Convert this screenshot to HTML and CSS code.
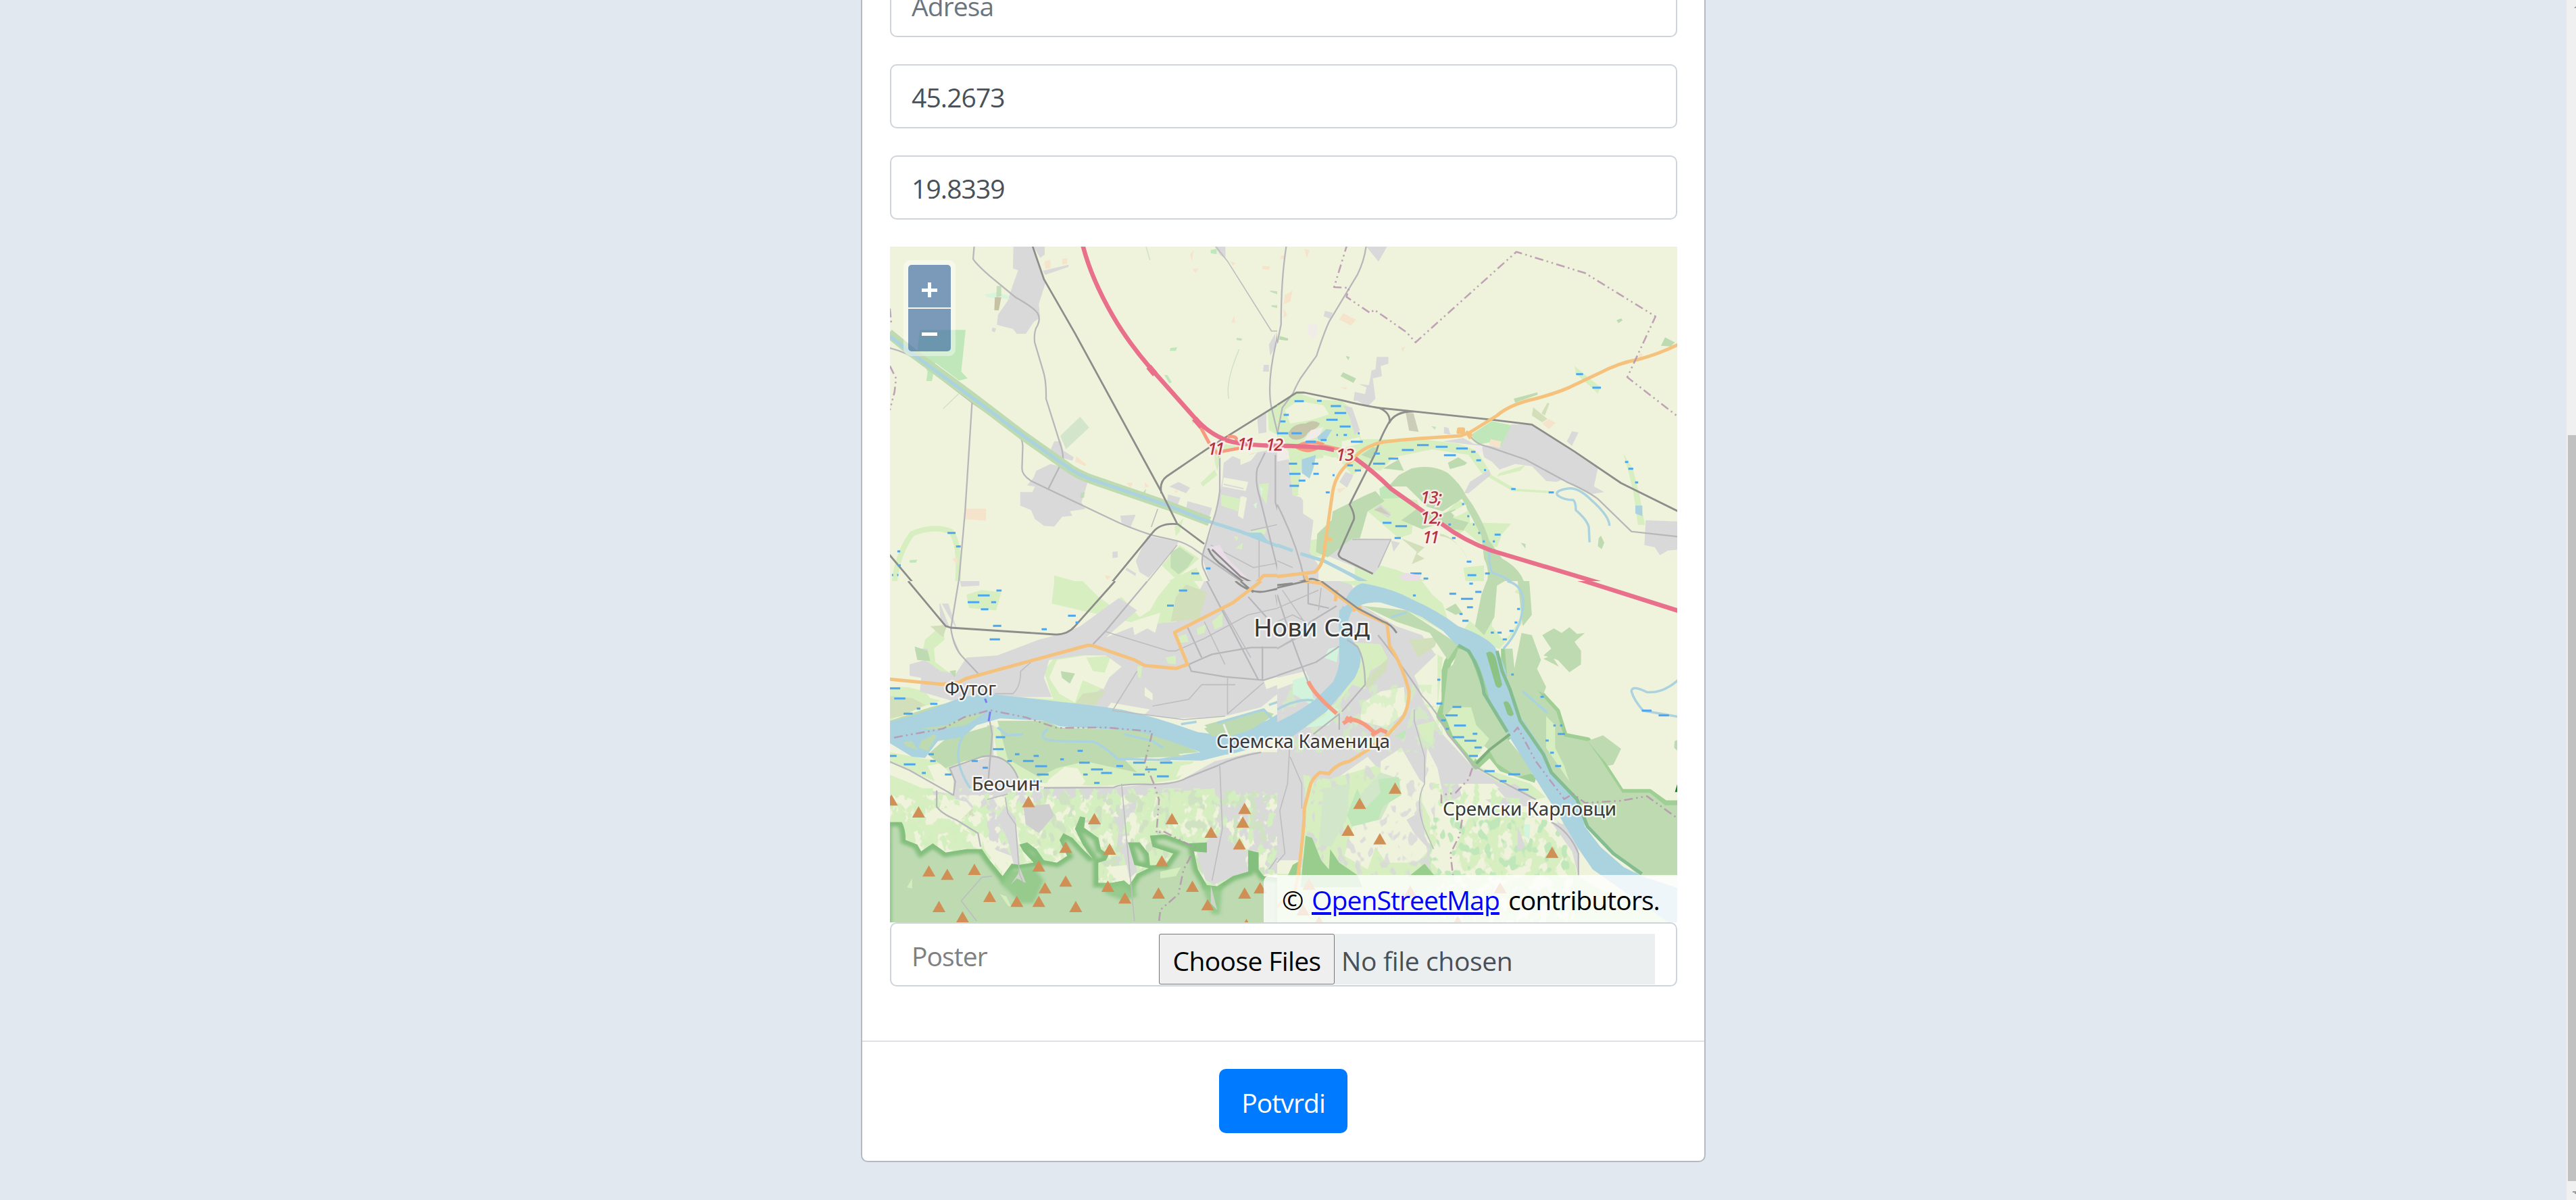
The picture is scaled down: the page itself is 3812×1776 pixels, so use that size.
FILE: index.html
```html
<!DOCTYPE html>
<html lang="sr">
<head>
<meta charset="utf-8">
<title>Potvrdi</title>
<link rel="stylesheet" href="styles.css">
</head>
<body>
<div class="page">
<main class="content">
<form class="card">
<div class="card-body">
<input class="field" type="text" placeholder="Adresa">
<input class="field" type="text" value="45.2673">
<input class="field" type="text" value="19.8339">
<div class="map-group">
<div class="map">
<svg class="map-canvas" viewBox="1317 365 1165 1000" preserveAspectRatio="none">
<defs>
<path id="pk" d="M-25 0L0-50L25 0Z" fill="#d08f55"/>
<filter id="n1" x="0" y="0" width="1" height="1"><feTurbulence type="fractalNoise" baseFrequency=".022 .016" numOctaves="3" seed="4"/><feColorMatrix values="0 0 0 0 0 0 0 0 0 0 0 0 0 0 0 14 0 0 0 -7.2"/><feComposite in="SourceGraphic" operator="in"/></filter>
<filter id="n2" x="0" y="0" width="1" height="1"><feTurbulence type="fractalNoise" baseFrequency=".028 .016" numOctaves="3" seed="11"/><feColorMatrix values="0 0 0 0 0 0 0 0 0 0 0 0 0 0 0 14 0 0 0 -7.6"/><feComposite in="SourceGraphic" operator="in"/></filter>
<filter id="n3" x="0" y="0" width="1" height="1"><feTurbulence type="fractalNoise" baseFrequency=".03 .018" numOctaves="2" seed="23"/><feColorMatrix values="0 0 0 0 0 0 0 0 0 0 0 0 0 0 0 14 0 0 0 -8"/><feComposite in="SourceGraphic" operator="in"/></filter>
<filter id="soft" x="-.1" y="-.1" width="1.2" height="1.2"><feGaussianBlur stdDeviation="7"/></filter>
<path id="hill" d="M30 1070L90 1070Q105 1100 105 1150L150 1170L165 1200L210 1165L260 1205L340 1190L400 1190L430 1240L480 1310L515 1255L545 1260L600 1250L560 1200L545 1170L575 1160L610 1190L640 1240L690 1250L730 1220L700 1150L715 1120L750 1140L790 1190L830 1235L790 1170L760 1100L780 1045L800 1050L795 1095L850 1140L860 1190L890 1215L880 1240L850 1250L850 1340L900 1340L950 1330L970 1350L1000 1300L1045 1275L990 1260L965 1160L1010 1160L1045 1210L1050 1262L1110 1260L1140 1210L1060 1180L1050 1130L1110 1125L1200 1165L1270 1160L1270 1205L1220 1200L1235 1280L1270 1350L1310 1355L1370 1310L1430 1290L1430 1195L1470 1205L1470 1280L1490 1310L1560 1320V1590H30Z"/>
<clipPath id="hillclip"><use href="#hill"/></clipPath>
</defs>
<rect class="farm" x="1317" y="365" width="1165" height="1000"/>

<!-- north-west -->
<svg x="1300" y="360" width="590" height="500" viewBox="0 0 1542 1500" preserveAspectRatio="none">
<path class="grass" d="M1165 1340L1240 1400L1150 1490L1095 1430ZM1245 1065L1300 1005L1310 1030L1255 1080ZM680 1475L790 1510H680ZM1300 905L1325 890L1390 900L1330 930L1310 1010L1300 970ZM1505 745L1542 720V850L1510 830ZM1120 1500L1230 1440L1260 1510ZM1205 770L1225 790L1215 805ZM1180 1220L1165 1280L1150 1300L1145 1260Z"/>
<path class="line grass-l" d="M60 1530Q70 1380 130 1290Q210 1250 280 1280Q320 1340 305 1530"/>
<path class="res" d="M522 15H592L645 180L620 270L625 330L600 350L570 402L535 402L520 380L490 372L458 362L462 318L500 255L515 200L540 120L520 112ZM600 15H643V50L625 65ZM635 122L735 95V105L645 140ZM440 375L455 378L450 395L438 390ZM600 1040L610 1010L665 980L700 990L720 985L770 1030L808 1065L785 1150L800 1180L740 1190L750 1210L710 1215L680 1258L640 1255L605 1225L590 1185L548 1165V1105H595L605 1080L575 1075ZM660 930L680 880L705 878L715 920L755 950L750 965L700 950ZM1040 1300L1160 1325L1150 1350L1045 1485L1010 1460L995 1410ZM1125 1080L1160 1060L1205 1085L1190 1110ZM1120 1115L1168 1130L1155 1168L1115 1155ZM1195 1145L1290 1175L1280 1215L1190 1180ZM1465 780L1500 750V840L1470 845ZM935 1210L995 1205L975 1260L940 1240ZM905 1370L925 1368V1395L905 1398ZM960 1440L995 1465V1478L955 1450ZM320 1500H390V1510H320ZM1300 15H1342V70L1320 50ZM1490 540H1510V570H1487ZM1510 450L1535 400V460L1515 500Z"/>
<path class="res" d="M1335 975L1370 945L1400 960L1440 935L1500 920H1545V1530H1290L1250 1390L1280 1300L1310 1180L1330 1050Z"/>
<path class="farm" d="M1400 950L1465 930L1440 965L1400 985ZM1335 1040L1430 1060L1420 1100L1330 1080ZM1400 1120L1425 1130L1410 1225L1390 1210Z"/>
<path class="stripes" d="M1335 1070L1412 1090M1335 1088L1410 1108M1335 1106L1405 1124"/>
<path class="grass" d="M1325 1115L1400 1135L1390 1190L1325 1165ZM1470 1070L1510 1065L1500 1160L1480 1120ZM1390 1345L1410 1330L1405 1360L1382 1355ZM1375 1300L1392 1305L1385 1325ZM1435 1280L1500 1265L1495 1290L1450 1310Z"/>
<path fill="#d6f5dc" d="M410 228L455 218L500 232L508 250L480 245L420 240ZM1475 1080L1488 1090L1480 1125ZM1450 1160L1465 1150L1460 1180Z"/>
<path class="park" d="M160 385H337L320 570L345 600L312 610L220 530L207 612H185L190 570L150 480ZM1105 585H1118L1135 618L1125 622ZM1130 465L1155 462L1150 478L1126 478ZM1285 30L1308 25L1308 48L1285 45ZM120 1407L150 1405L145 1418L120 1418Z"/>
<path fill="#d3e6cb" d="M780 770L815 818L725 915L703 855Z"/>
<path class="wood" d="M457 190H475V235L456 240ZM782 1110L798 1105L795 1130L780 1130ZM1130 1370L1165 1350L1220 1395L1195 1440L1160 1470L1130 1440ZM1020 1110L1035 1090L1030 1125ZM1515 210L1550 215L1545 228L1515 215ZM1385 420L1405 423V433L1385 430ZM1520 275H1550V290L1520 282Z" opacity=".85"/>
<path fill="#c6c2a3" d="M450 240H475L465 298H448Z"/>
<path class="sand" d="M643 80L665 73V110L645 115ZM710 70L730 66V90L712 95ZM335 1178H416V1232L335 1225ZM1485 100L1515 103L1510 118L1485 115ZM1215 115L1240 110L1225 132ZM1360 80L1383 88L1370 100ZM765 945L803 980L800 990L760 970ZM960 1065L985 1062L975 1085ZM1030 1060L1045 1080L1030 1085ZM1145 1095L1160 1100L1148 1110ZM285 1400L305 1395V1430ZM875 1475L900 1478L885 1495ZM1365 350L1380 355L1375 320ZM1205 50L1220 30L1212 80Z"/>
<path class="road" d="M370 15L366 70Q380 95 430 145L530 240Q600 285 615 310Q628 335 615 365Q600 390 604 440L635 560Q650 610 648 690L700 880Q718 940 712 965L655 1095M44 465Q110 485 150 520L360 705L530 840Q557 860 558 900L555 1000Q555 1030 590 1055L900 1225Q960 1260 1060 1297L1150 1320Q1190 1330 1230 1365L1400 1500M362 705L335 1190L310 1510"/>
<path class="line canal-edge" d="M40 400L130 485L360 680L560 855L720 985Q770 1030 840 1055L1120 1165L1280 1235"/>
<path class="line canal" d="M40 410L130 490L360 683L560 855L720 985Q770 1030 840 1055L1120 1165L1250 1225L1400 1280L1545 1345"/>
<path class="water" d="M1410 1285L1480 1285L1505 1320L1490 1328Z"/>
<path class="road" d="M1320 955V1100Q1310 1190 1285 1260L1265 1340Q1245 1400 1255 1440L1290 1530M1535 940V1150L1600 1400M1495 930L1465 1000Q1455 1060 1475 1130L1555 1500M1562 15Q1560 300 1540 430Q1500 620 1520 730L1545 850"/>
<path class="minor" d="M1305 15L1350 80L1520 390H1545M1285 1340L1450 1440L1545 1420M1472 1320V1500M1440 1275L1560 1245M1155 1340L1020 1530M1080 1180L1055 1260"/>
<path fill="none" stroke="#cfe3c0" stroke-width="1.5" vector-effect="non-scaling-stroke" d="M1395 470Q1340 620 1355 690M250 735L310 668M1035 15L1050 75"/>
<path fill="#eadde7" d="M1275 1350L1320 1340L1350 1400L1430 1490L1400 1500Z"/>
<path class="rail" d="M592 0L640 160L760 400L1090 1095L1155 1245L1260 1335M1094 1110Q1085 1060 1115 1035L1275 910L1345 860L1568 700M885 1530L1060 1285Q1090 1240 1155 1247M40 1380L150 1530M1275 1355Q1290 1400 1340 1440L1430 1520M1290 1360L1400 1480L1460 1515"/>
<path class="trunk" d="M1245 815L1285 900L1320 945M1325 925L1395 910M1350 860Q1390 850 1385 885"/>
<path class="sec" d="M1440 1530L1490 1475L1545 1475"/>
<path class="mway" d="M788 0Q820 150 905 320Q960 430 1045 545L1215 765Q1270 840 1340 872Q1400 898 1568 900"/>
<path class="mway wide" d="M1045 548L1070 582M1222 778L1250 815"/>
<path class="bound" d="M44 290L50 360M44 545L68 600L62 660L44 740"/>
<path class="wet" d="M267 1286h31M300 1346h18M73 1368h11M74 1430h12M1210 1466h30M1266 1444h18M1555 762h15M1548 844h20M52 1473h5M72 1473h5"/>
</svg>

<!-- north-east -->
<svg x="1890" y="360" width="600" height="500" viewBox="0 0 1568 1500" preserveAspectRatio="none">
<path class="grass" d="M0 720L80 665L160 695L250 700L290 740L325 870L560 870L700 890L770 920L810 990L830 1030L920 1090L1060 1100L1060 1110L910 1100L790 1020L740 940L600 915L450 950L400 1010L330 1000L290 1030L240 960L180 940L150 1080L60 1130L45 940L30 880L0 860ZM350 1190L420 1120L540 1140L560 1190L530 1200L520 1290L470 1310L400 1240ZM1150 545L1250 640L1240 668L1215 640L1155 580ZM1338 932L1375 1000L1400 1110L1422 1250H1395L1378 1110L1360 1020ZM700 1250L760 1240L905 1245L870 1290L850 1350L780 1330ZM860 1020L960 985L940 1010L850 1035ZM300 1400L460 1450L600 1510H300ZM720 1440L800 1430V1510H730ZM120 1320L170 1310V1390H120ZM10 1165H48V1260L20 1220ZM700 1140L745 1170V1260L690 1300L650 1200Z"/>
<path class="res" d="M0 940L45 960L60 1120L100 1130V1200L140 1230L125 1370L160 1430V1510H0ZM200 1390L285 1240L305 1250L290 1310L440 1315L395 1440L370 1470ZM865 905L905 805L985 805L1240 1000L1225 1080L1265 1105L1210 1115L1100 1050L1080 1060L1040 1055L985 990L920 980L860 1005L830 970L800 950L790 900L640 880L720 865L760 890ZM1425 1230L1550 1235V1360L1510 1365L1480 1385L1460 1350L1420 1340ZM345 15H425L392 82ZM385 505H430V535L400 545L405 590L370 600L380 690L350 725L310 700L295 700L300 660L340 670L345 640L315 625L355 630L365 565L380 560ZM185 300L215 308L205 335L180 325ZM240 1060L265 1015L295 1030L270 1085ZM375 1180L400 1160L440 1200L430 1220ZM723 1110L745 1060L820 1005L825 1030L740 1110ZM440 1320L475 1330L450 1370ZM1120 880L1140 835L1165 840L1140 900ZM645 815L662 820L670 850L645 845ZM255 720L290 730L320 830L300 850L280 770ZM510 1050L535 1065V1085L515 1080Z"/>
<path class="farm" d="M30 740L80 700L180 720L200 760L130 785L50 800ZM100 960L230 950L240 1020L190 1120L130 1190L80 1110ZM250 880L320 860V890L250 910Z"/>
<path class="wood" d="M520 1000Q600 980 660 1020Q710 1070 730 1120Q790 1210 820 1320L870 1400Q950 1450 960 1530H800Q830 1470 800 1400L790 1300L715 1135L640 1190L580 1170L500 1080H430L470 1030ZM340 1120L380 1100L415 1145L350 1190L320 1310H290L195 1395L150 1370L155 1290L210 1230L215 1190ZM410 1000L470 960L490 1010ZM660 975L700 950L735 975L725 985L668 1003ZM480 1230L540 1180L640 1200L690 1180L680 1220L740 1240L720 1275L680 1270L640 1240L560 1270ZM915 690L1005 662L1008 672L920 708ZM245 590L255 573L305 600L295 620ZM1500 418L1538 440L1522 458L1484 455ZM1243 1310L1252 1298L1265 1330L1255 1358L1240 1345ZM1312 342L1330 334L1336 342L1320 355ZM942 1330L960 1335V1355ZM325 940L370 905L390 910L370 960ZM10 412L42 422V433L8 428ZM265 500L280 505L275 520Z"/>
<path class="park" d="M830 790L905 808L865 905L840 880L775 895L750 850ZM395 1090L430 1065L480 1130L400 1135ZM595 812L615 815L610 828Z"/>
<path fill="#d3dfbb" d="M990 728L1045 780L1025 795L985 765ZM1022 755L1045 708L1053 712L1035 765ZM630 1290Q690 1300 740 1410Q700 1310 630 1300ZM480 1310L570 1350L540 1380L570 1400L520 1425L540 1370Z"/>
<path class="farm" d="M672 1195L730 1160L735 1190L690 1215Z"/>
<path fill="#cbcdb8" d="M497 752L527 755L547 838L510 832ZM375 1185L400 1170L440 1210Z"/>
<path fill="#c6c6aa" d="M45 840Q60 800 110 800Q140 780 165 800Q160 820 120 840Q100 880 60 870Q40 860 45 840Z"/>
<path class="sand" d="M240 340L255 310L305 340L285 365ZM825 870L867 880L860 910L820 895ZM1025 800L1050 780L1077 798L1050 825ZM30 230L60 210L50 260L25 270ZM105 25L125 30L115 65ZM480 465L495 460L485 485ZM25 290L40 320L25 330ZM245 640L272 640L265 650ZM15 55H30V70H12ZM230 1090L265 1085L240 1110ZM1400 490H1412V510H1398Z"/>
<path fill="#f1ece8" d="M120 360H155V400L140 425L118 400ZM763 905L795 895L790 935L765 925ZM0 920H45L40 960L0 970ZM130 830L180 815L160 860L100 880Z"/>
<path class="water" d="M155 860L190 825L212 828L190 870L160 875ZM95 960L150 940L140 1000L125 1045L95 1020ZM1385 1165H1412V1212L1385 1200ZM190 1420L240 1440L370 1510H330Z"/>
<path class="line canal" d="M0 1340L60 1365M90 1378L180 1410L300 1480"/>
<path class="stream thick" d="M1285 1255Q1285 1210 1210 1135Q1160 1080 1120 1090Q1070 1100 1085 1120Q1110 1140 1145 1140Q1155 1150 1155 1185Q1200 1230 1205 1260L1208 1328M820 1360Q820 1460 835 1465Q890 1480 940 1540"/>
<path class="road" d="M37 0Q15 150 15 360L0 445M345 0Q340 70 310 140L200 350Q180 400 152 500L90 600Q70 640 62 665L20 730L0 850M745 850Q760 890 820 905L960 960L1120 1060Q1200 1100 1240 1135L1370 1280L1550 1303M0 1160Q80 1340 108 1510"/>
<path class="minor" d="M290 1315H440L390 1440M0 1410L60 1440"/>
<path class="rail" d="M0 718L75 663H105L250 697Q330 720 400 732L540 748L840 785L985 805L1150 925L1330 1065L1550 1190M395 732Q435 750 435 790Q395 870 385 920L280 1160Q300 1200 297 1225L237 1380Q237 1395 260 1405L370 1468M530 747Q455 745 432 800M0 1530L130 1490Q160 1490 200 1530"/>
<path class="trunk" d="M80 900Q130 870 180 895M75 905Q120 935 160 905M180 900L280 925"/>
<path class="sec" d="M1550 450Q1480 490 1400 515Q1320 530 1240 580L1130 640Q1080 665 1000 690Q900 715 850 765L745 840L710 855L580 865Q450 875 400 885Q320 910 295 960Q230 1010 215 1100L185 1340Q180 1430 145 1460L0 1480M185 1315H212M110 1475L120 1505L190 1515"/>
<path class="sec" fill="#f4c27e" d="M700 840H720V825H702ZM735 840L745 862L748 850Z"/>
<path class="mway" d="M0 899Q100 900 180 908L220 918M302 955Q380 1020 440 1090L570 1195M635 1245Q720 1320 830 1365L1310 1530"/>
<path class="bound" d="M272 0L220 195L278 198L268 238L360 310L375 295L500 395L535 440L925 38L1190 132L1463 325L1354 595L1550 770"/>
<path class="wet" d="M67 701h36M154 700h18M207 723h40M222 754h45M190 784h44M25 762h20M12 791h20M242 814h42M0 844h43M55 844h40M168 874h23M110 881h39M285 881h46M482 918h46M541 896h45M613 904h46M645 941h46M692 911h45M750 926h17M770 964h18M430 956h38M371 979h46M45 979h32M47 1024h43M140 1024h21M83 1054h26M48 1077h36M135 979h24M271 986h22M300 1009h24M374 934h23M188 1106h15M408 1241h34M457 1256h45M454 1309h24M515 1466h43M566 1489h18M733 1414h18M736 1474h34M742 1511h14M804 1466h18M841 1294h23M905 1091h17M1050 1106h20M1156 581h27M1219 641h33M1345 971h13M1358 1001h19M1384 1062h12M676 1309h14M229 851h6M257 851h13M312 844h7M214 1030h8M800 1007h8M735 1212h8M757 1249h6M777 1286h8M795 1324h8M834 1324h8M715 1158h8M662 1249h10"/>
<path fill="#eadde7" d="M470 1480L500 1463L558 1475L535 1530Z"/>
</svg>

<!-- south-west -->
<svg x="1300" y="860" width="590" height="520" viewBox="0 0 1542 1560" preserveAspectRatio="none">
<path class="grass" d="M680 0H790L850 70L900 110L940 70L1010 160L1050 130L1080 70L1130 0H1220L1260 60L1200 160L1100 190L1040 200L860 150L780 130L670 100ZM340 60L400 40L475 50L455 130L350 120ZM180 260L250 190L255 260L215 300L220 360L300 430L200 380L170 320ZM40 470H110L180 490L200 520L240 530L120 580L40 620ZM640 400L680 340L770 320L810 340L900 330L870 420L860 500L960 560L700 560L670 510ZM430 510L700 525L860 560L690 545L440 530ZM44 760L180 790L260 800L290 860L220 890L120 840L44 800ZM440 640L520 680L560 760L680 740L960 800H1220L1160 880L1040 900L850 910L660 900L540 880L460 780ZM280 820L420 790L430 880L340 860Z"/>
<path class="res" d="M44 900L200 930L420 970L640 920L900 918L1160 890L1300 800L1450 760H1545V1300H1500L1350 1340L1280 1420L1230 1280L1180 1180L1060 1180L970 1150L950 1330L860 1180L700 1080L560 1240L420 1180L320 1180L230 1180L100 1180L44 1060ZM420 640L445 640V780Q500 790 540 880L640 915L560 940L420 985L350 990L290 950L290 880L275 830L430 780Z"/>
<path class="grass" d="M44 860L130 900L210 940L230 1020L400 1120L480 1320L100 1320L44 1170ZM640 1000L760 960L880 980L930 1100L900 1370L720 1230L560 1280L500 1200L470 1000L600 980ZM1000 960L1100 940L1300 920L1310 1300L1200 1300L1000 1330L980 1140Z"/>
<path class="res" d="M120 370L180 350L240 400L300 410L340 340L460 330L620 260L720 230L780 200L930 75L1000 130L880 250L990 200L1150 180L1200 130L1260 0H1545V500L1480 560L1340 600L1150 610L1000 590L820 560L780 540L860 480L880 440L940 380L880 330L780 330L660 350L640 430L670 515L460 515L280 530L160 490L165 430L120 420ZM315 0H390V20L320 25ZM235 100H270L300 200L330 330L300 300L280 210L240 180ZM140 300H190V350L150 345Z"/>
<path class="farm" d="M225 60L290 250L320 330L560 260L670 240L560 235L300 210ZM690 350L800 330L830 400L900 410L870 480L790 440L760 540L700 500L660 430ZM1030 470L1060 500V530L1030 510ZM900 540L1050 570L1020 600L880 570ZM980 180L1090 140L1070 230L1040 210L990 240ZM1490 440L1545 420V460L1500 480ZM660 880L720 825L770 830L800 890L780 915L640 915ZM190 820L240 810L290 870V940L230 920ZM230 950L340 980L400 1060L440 1180L300 1080L235 1020ZM1150 870L1170 820L1260 800L1200 850Z"/>
<path fill="#d2dfbb" d="M1150 70L1190 15L1270 50L1240 170L1130 180ZM790 500L880 485L840 550L760 545ZM44 510L130 520L180 550L90 600L44 610ZM370 1000L430 1000L380 1040L320 1060ZM200 200L265 195L250 250Z"/>
<path class="wood" d="M44 620L200 560L340 520L360 530L160 640L44 640ZM705 400L760 410L740 455L710 430ZM1260 640L1480 570L1530 590L1400 690L1320 690ZM140 290L190 310L200 355L150 350ZM275 400L300 395L295 430ZM260 700L440 640V775L330 800L260 830L190 770ZM460 620H650L700 650L1060 665L1240 760L950 790L1000 850L800 800L690 830L620 870L500 790ZM700 540L830 565L850 590L700 570Z"/>
<path class="grass" d="M1290 180L1330 140L1330 200L1300 215ZM1230 210L1270 190L1260 230L1235 240ZM1150 250L1190 235L1200 270L1160 275ZM1000 380L1020 375L1015 430H1005ZM1110 340L1150 330V370L1120 365Z"/>
<rect x="44" y="950" width="1500" height="420" fill="#f0f3dc" filter="url(#n1)"/>
<rect x="44" y="920" width="1500" height="450" fill="#d3efc0" filter="url(#n2)"/>
<rect x="600" y="930" width="940" height="400" fill="#cfe3c2" filter="url(#n3)"/>
<path fill="#d0cfcf" d="M560 1000L660 990L680 1040L620 1120L570 1080Z"/>
<path class="res" d="M1230 1200L1300 1120L1420 1200L1420 1290L1300 1345L1265 1330ZM490 1000L530 1050L550 1290H530L500 1150L460 1050ZM940 1180L980 1170L1000 1290L970 1320Z"/>
<path class="farm" d="M400 1130L460 1200L500 1260L495 1305L470 1280L410 1190ZM880 1270L960 1260L970 1320L930 1330ZM730 1080L760 1120L800 1170L770 1150Z"/>
<use href="#hill" fill="#bddab1"/>
<g clip-path="url(#hillclip)">
<use href="#hill" fill="none" stroke="#83bf7d" stroke-width="40" filter="url(#soft)"/>
<path d="M490 1290L600 1270L640 1330L600 1430L550 1430L470 1340ZM850 1330L990 1330L1000 1400L950 1420L880 1390ZM1250 1350L1330 1350L1320 1480L1290 1480Z" fill="#8cc785" opacity=".8" filter="url(#soft)"/>
<path d="M545 1270L570 1340L535 1320L510 1350L540 1300ZM1285 1350V1430L1310 1460" fill="#d0d5cc"/>
</g>
<path class="grass" d="M470 1390L495 1400L515 1450L500 1440ZM130 1320L110 1360L130 1365ZM1090 1290L1170 1270L1150 1310L1090 1320Z" opacity=".9"/>
<path class="line river" d="M30 667Q150 640 270 580Q370 530 470 545L700 575Q830 590 940 610Q1060 640 1180 690L1290 735Q1400 740 1545 640"/>
<path class="water" d="M44 640L150 620L340 530L470 515L640 550L740 580L880 585L1000 615L1160 660L1300 680L1500 620L1545 590V690L1380 760L1250 797L1130 795H930L1080 790L1245 760L1050 670L700 645L640 620L470 610L380 640L330 690L230 710L180 785L130 780L44 720Z"/>
<path class="wood" d="M160 655L260 640L340 600L410 585L340 640L230 660ZM95 715L130 710L150 750L110 735ZM165 710L215 680L225 690L190 755L155 740ZM650 670L880 670L1000 680L1180 780L960 785L850 715L640 700ZM1260 655L1320 625L1480 572L1525 600L1440 660L1360 690L1290 690Z"/>
<path class="stream thick" d="M325 690Q280 790 355 920M460 650L500 685L560 680M655 655Q600 710 700 710L830 713Q870 730 925 790L1130 795M1310 630L1490 570L1520 610M1100 740L1060 710L950 680M1510 550L1560 530M1170 635L1230 625"/>
<path class="line" d="M1335 635L1350 680" stroke="#eee" stroke-width="3"/>
<path class="road" d="M40 800L120 840L290 950L297 890L275 830L400 780Q500 760 540 875M640 918L910 916Q940 898 1060 903Q1150 900 1190 875L1310 820Q1380 780 1480 760M310 0L280 210Q290 290 320 330L385 410M430 620L440 680L425 880M225 930V1000Q240 1030 300 1060L385 1120L395 1180M1040 0L880 220L830 280M1270 0L1470 440M1430 70L1500 160M1200 370L1290 325L1440 295H1560M1200 370L1210 400L1340 425L1490 440L1545 420M1485 290V440M1195 205L1250 340"/>
<path class="minor" d="M940 900L960 1150L975 1330L990 1510M490 960L500 1030L530 1080L545 1300L560 1340M1320 820L1330 1100L1290 1330M880 225L1120 310L1150 310M1000 400L905 575L1180 615L1340 600M1060 555L1200 525L1250 460H1380M1350 430V590L1490 450M1260 180L1340 370M1330 120L1440 340M1150 310L1260 255L1430 150L1545 120M450 500L520 500Q550 470 550 400L590 360M1560 980V1200L1510 1280M420 970L500 945M440 1310L400 1315L320 1420L380 1510M1535 60L1545 120"/>
<path class="rail" d="M115 0L260 200L280 207L680 237Q730 240 760 200L915 0M1380 0Q1440 60 1500 45L1560 30M1400 0L1450 50"/>
<path class="sec" d="M40 435L245 458L310 450L340 432L810 285L830 287L990 350L1030 375L1150 388L1195 370L1145 228L1370 97L1480 0"/>
<path fill="none" stroke="#7a7cf5" stroke-width="3" vector-effect="non-scaling-stroke" d="M412 522L418 540M432 580L426 622"/>
<path class="bound" d="M60 695L250 655L330 605L430 573L570 605L690 652L880 650L1060 668L1030 805L1065 900L1085 970L1075 1120L1100 1110L1225 1185L1180 1280L1160 1390L1090 1460L1085 1510"/>
<path class="wet" d="M384 64h46M345 94h45M436 94h19M396 125h29M456 42h20M443 199h32M430 259h40M733 154h30M762 184h12M631 214h20M1162 42h32M1116 109h26M44 476h40M61 521h43M97 589h35M148 566h14M200 545h28M454 693h36M443 746h41M194 769h20M44 776h26M200 799h21M98 814h45M257 859h25M168 852h15M360 799h24M403 829h20M498 799h18M528 769h17M600 776h20M559 799h41M606 822h46M613 859h45M596 889h36M776 806h41M822 836h46M861 852h42M834 896h21M792 859h17M920 821h26M985 806h45M1031 836h45M985 859h45M1089 806h47M1077 867h46M770 754h20M703 791h14"/>
<use href="#pk" x="50" y="997"/><use href="#pk" x="155" y="1050"/><use href="#pk" x="580" y="1004"/><use href="#pk" x="835" y="1080"/><use href="#pk" x="1135" y="1080"/><use href="#pk" x="1416" y="1034"/><use href="#pk" x="1409" y="1095"/><use href="#pk" x="1286" y="1140"/><use href="#pk" x="1396" y="1192"/><use href="#pk" x="724" y="1207"/><use href="#pk" x="894" y="1215"/><use href="#pk" x="1096" y="1267"/><use href="#pk" x="195" y="1312"/><use href="#pk" x="266" y="1327"/><use href="#pk" x="371" y="1305"/><use href="#pk" x="620" y="1290"/><use href="#pk" x="724" y="1357"/><use href="#pk" x="644" y="1387"/><use href="#pk" x="430" y="1425"/><use href="#pk" x="535" y="1447"/><use href="#pk" x="620" y="1447"/><use href="#pk" x="234" y="1470"/><use href="#pk" x="325" y="1516"/><use href="#pk" x="763" y="1470"/><use href="#pk" x="887" y="1380"/><use href="#pk" x="953" y="1432"/><use href="#pk" x="1083" y="1410"/><use href="#pk" x="1214" y="1380"/><use href="#pk" x="1273" y="1462"/><use href="#pk" x="1416" y="1410"/><use href="#pk" x="1476" y="1387"/><use href="#pk" x="1423" y="1550"/>
</svg>

<!-- south-east -->
<svg x="1890" y="860" width="600" height="520" viewBox="0 0 1568 1560" preserveAspectRatio="none">
<path class="res" d="M0 0H280L330 110L460 200L560 240L620 340L540 430L560 520L640 680L760 830L900 900L1100 1080L1170 1250L1050 1000L850 1000L740 930L650 1000L620 830L580 740L570 900L500 830L410 860L350 780L200 900L120 1000V1240H0Z"/>
<path class="grass" d="M240 0H560L780 210L960 0L980 150L860 300L700 260L500 130L330 30ZM640 340L610 320L620 600L560 540L620 560ZM270 270L400 280L430 350L360 400L340 480L290 460L200 600L120 650L90 640L230 540L320 380ZM540 640L610 620L600 730L560 700ZM740 810L980 900L1040 960L1000 970L850 890ZM100 860L200 880L380 820L560 900V980L620 1120L600 1250L700 1400H0V1310H90L110 1000ZM760 1000L980 1030L1150 1250L1160 1310H700L690 1180Z"/>
<path class="grass" d="M0 1300H1150L1250 1370L1400 1440L1550 1500V1560H0Z"/>
<path class="farm" d="M560 0H780L770 130L720 220L660 170L640 100L600 60ZM400 490L490 470L500 580L420 650L320 620L330 540ZM530 420L620 320V560L590 540L550 470ZM640 560L620 620L580 560ZM400 800L480 740L560 900L540 1060L600 1180L540 1250L420 1250L380 1180L350 1280L260 1220L300 1060L390 1040L420 950L400 860ZM700 900L840 900L900 960L720 980ZM0 430L110 400L120 430L0 480ZM840 30H880L940 60V170L880 270L830 200Z"/>
<rect x="20" y="460" width="620" height="300" fill="#d3efc0" filter="url(#n2)" opacity=".7"/>
<rect x="90" y="820" width="520" height="490" fill="#d9d9d9" filter="url(#n3)" opacity=".8"/>
<rect x="600" y="900" width="420" height="100" fill="#d3efc0" filter="url(#n2)"/>
<rect x="590" y="1050" width="560" height="510" fill="#f0f3dc" filter="url(#n1)"/>
<rect x="590" y="1050" width="560" height="260" fill="#bfe7b9" filter="url(#n3)"/>
<path fill="#d9d9d9" d="M500 1060L560 1020L570 1130L600 1200L570 1170L530 1120ZM920 900L1000 970L880 960L850 920ZM1060 1070L1110 1080L1165 1190V1310L1140 1200ZM930 1090L960 1180L930 1200Z"/>
<path fill="#d2e6ca" d="M180 920L280 900L270 1050L210 1180L160 1170ZM400 850L480 880L400 1060L280 1080L320 950Z"/>
<path class="park" d="M390 880L470 870L480 950L410 1000L390 1060L290 1090L270 1040L310 920L340 1010L400 940ZM450 690L500 660L490 700Z"/>
<path fill="#d2dfbb" d="M350 430L430 340L420 400L360 470L335 470ZM510 260L620 250L610 290L545 340Z"/>
<path fill="#d2f3dc" d="M60 440L120 420L140 520L240 570L200 640L110 650L190 590L60 500ZM200 300L240 290L230 360L180 340ZM955 1080L978 1080L975 1145L955 1130Z"/>
<path class="forest-edge" d="M700 290L660 360L650 400L650 530L630 600L770 820L890 690L800 470L740 300ZM880 300V400L1000 480L1080 580L1110 690L1200 710L1330 940H1440L1500 990H1550M820 760L870 830L1000 880"/>
<path class="wood" d="M700 300L740 310L790 470L890 680L820 750L640 590L660 390L680 370ZM1025 240L1070 210L1100 230L1130 205L1160 235L1190 230L1150 270L1175 310V370L1130 405L1085 350L1030 330L1060 300ZM1030 345L1060 330L1090 380ZM880 300H910L920 420L1010 490L1080 580L1110 690L1200 710L1250 790L1335 940H1440L1500 995H1550V1310H1400L1200 1100L1060 870L940 640L890 430ZM945 230L985 240L1020 350L1005 390L1040 470L1030 500L910 430ZM1200 710L1260 685L1330 745L1300 815L1280 820ZM330 110L500 130L620 220L700 280L660 350L590 230L460 180ZM810 0H880L850 20L840 160L800 240L765 200L790 60ZM930 0H975L985 150L950 200L940 100ZM820 750L890 700L1000 850L930 870L850 810ZM650 125L690 100L715 140L690 150ZM1537 710L1550 705V755L1535 740Z"/>
<path class="grass" d="M680 560L750 560L770 640L820 700L760 800L680 690L650 600ZM1040 600L1075 640V740L1110 820L1130 890L1040 740Z"/>
<path class="line river thin" d="M270 120Q240 180 275 290Q320 370 240 450L170 530Q100 600 -40 670"/>
<path class="water" d="M240 130L290 90L300 105L275 170V240L310 290Q340 340 300 430L190 580L60 690H0V640L160 540Q230 450 240 360ZM265 80Q290 20 330 10Q440 30 520 80Q620 130 700 200Q800 240 840 290Q880 360 890 430L940 600L1040 770L1060 850L1160 970L1190 1090L1250 1180L1340 1270L1410 1310L1568 1370V1560L1220 1280L1160 1180L1100 1060L1000 880L880 660L830 570Q800 420 770 350L690 280L640 220L560 160L500 130L400 95Q330 90 290 130Z"/>
<path class="forest-line" d="M700 285L740 310Q790 400 800 500L890 670M850 310L870 400L900 480L940 620L1030 770L1060 850L1160 970L1200 1090L1300 1210L1410 1300"/>
<path fill="#8cc385" d="M808 320Q830 300 845 340L870 460Q860 485 845 465ZM875 540Q890 520 905 560L915 590Q905 610 890 590Z"/>
<path fill="#99cd8e" d="M90 1360L110 1130L135 1140L170 1240L200 1280L205 1190L240 1250L310 1305L330 1360ZM40 1310L60 1260L90 1240V1310ZM510 1310L570 1255L610 1310Z"/>
<path class="stream thick" d="M890 0Q960 20 950 120Q940 220 875 300M1550 440Q1490 500 1430 493Q1370 460 1370 490Q1380 530 1415 575L1550 602M950 490L1045 585M0 570Q80 520 140 530M440 160L500 140"/>
<path fill="none" stroke="#7fae7f" stroke-width="4" vector-effect="non-scaling-stroke" d="M770 810L820 750L900 680"/>
<path class="road" d="M0 60Q60 280 120 450M390 240Q500 400 560 510Q620 580 660 680L760 820L860 885L1000 970M1060 1070Q1130 1110 1165 1210V1310M0 300L60 260L130 180L230 110M250 580L340 460Q340 350 310 290L270 260M120 0V100L200 120M0 420L150 360L240 290M140 680L240 590V660"/>
<path class="minor" d="M0 120L80 80L160 40M20 40L110 190M530 570V620L570 780V900Q530 980 570 1100L605 1190M50 780L95 900V1010M50 700L40 900L10 1020L30 1210L0 1250M170 30L160 130M0 180L60 150L110 180L100 240L0 300"/>
<path class="sec" d="M105 0L170 10L260 85L330 140L425 190L435 290Q480 360 510 490Q510 590 460 640L430 680L350 750L280 800Q230 810 200 855L165 850Q130 880 125 920L105 1010Q105 1100 80 1310L70 1370L-40 1490M230 40L225 90M290 130L325 115"/>
<path class="rail" d="M0 30L130 -5M170 0L310 120L410 180Q440 190 462 230M0 18L60 10"/>
<path class="trunk wide" d="M120 445Q140 500 230 588M290 615Q330 620 378 675M365 685L400 660L425 672M255 632L290 605M265 605L290 625"/>
<path class="mway" d="M1140 -18L1180 -3L1568 138"/>
<path class="bound" d="M915 670L930 650L1000 800L1110 968L1145 945L1190 985L1330 975L1430 955L1550 1055M755 830L740 880L690 940L635 950V990M715 1060L705 1130L670 1210L680 1310"/>
<path class="wet" d="M666 56h26M711 79h46M734 116h23M716 176h24M766 48h24M743 11h14M619 438h12M616 544h23M678 559h34M651 596h47M684 641h46M678 693h45M724 709h46M763 739h28M742 776h34M756 678h18M801 844h40M894 858h46M861 888h26M932 926h40M1075 821h23M1056 762h14M1085 679h28M1018 514h13M1410 575h38M1475 596h40M898 221h16M872 259h16M852 229h16M826 229h12M928 124h11M918 184h11M705 146h12M634 618h18M652 656h12M1038 708h12M1068 641h9M1094 641h9M905 415h10M525 64h11"/>
<use href="#pk" x="456" y="944"/><use href="#pk" x="319" y="1012"/><use href="#pk" x="274" y="1131"/><use href="#pk" x="397" y="1169"/><use href="#pk" x="1063" y="1229"/><use href="#pk" x="123" y="1371"/><use href="#pk" x="515" y="1402"/><use href="#pk" x="862" y="1387"/><use href="#pk" x="100" y="1484"/><use href="#pk" x="162" y="1536"/><use href="#pk" x="698" y="1536"/>
<path fill="#0a8a1c" d="M1538 937L1550 890V937Z"/>
</svg>

<g class="place">
<text class="city" x="1855" y="942" textLength="172" lengthAdjust="spacingAndGlyphs">Нови Сад</text>
<text x="1398" y="1029" textLength="76" lengthAdjust="spacingAndGlyphs">Футог</text>
<text x="1800" y="1107" textLength="257" lengthAdjust="spacingAndGlyphs">Сремска Каменица</text>
<text x="1438" y="1170" textLength="101" lengthAdjust="spacingAndGlyphs">Беочин</text>
<text x="2135" y="1207" textLength="257" lengthAdjust="spacingAndGlyphs">Сремски Карловци</text>
</g>
<g class="ref">
<text x="1787" y="673" textLength="24">11</text><text x="1831" y="666" textLength="24">11</text><text x="1873" y="667" textLength="25">12</text><text x="1977" y="682" textLength="26">13</text>
<text x="2102" y="745">13;</text><text x="2102" y="775">12;</text><text x="2105" y="804" textLength="24">11</text>
</g>
</svg>
<div class="zoom"><button type="button" class="zoom-in" aria-label="Zoom in"><svg viewBox="0 0 63 63"><path d="M20 37.500H43M31.500 26V48"/></svg></button><button type="button" class="zoom-out" aria-label="Zoom out"><svg viewBox="0 0 63 63"><path d="M20 37.500H43"/></svg></button></div>
<div class="attribution"><span class="copy">©</span><a href="#">OpenStreetMap</a><span class="contrib">contributors.</span></div>
</div>
<div class="poster"><span class="poster-label">Poster</span><div class="file"><button type="button" class="choose">Choose Files</button><span class="none">No file chosen</span></div></div>
</div>
</div>
<div class="card-footer"><button type="button" class="submit">Potvrdi</button></div>
</form>
</main>
<div class="scrollbar"><svg viewBox="0 0 14 1776"><rect x="2" y="644" width="12" height="1104" fill="#c1c1c1"/><path d="M9 1763H14V1767H12V1765H9ZM11 12L14 9V12Z" fill="#9a9a9a"/></svg></div>
</div>
</body>
</html>
```
FILE: styles.css
```css
* { box-sizing: border-box; }
body { margin: 0; overflow: hidden; font-family: "Open Sans", "Noto Sans", sans-serif; font-size: 39px; letter-spacing: -0.9px; }
.page { display: flex; height: 1776px; overflow: hidden; background: #e1e8f0; }
.content { flex: 1; display: flex; justify-content: center; align-items: flex-start; }
.scrollbar { width: 14px; background: #f0f0f0; }
.scrollbar svg { display: block; width: 14px; height: 1776px; }
.card { width: 1250px; margin-top: -100px; background: #fff; border: 2px solid #b4b9c2; border-radius: 10px; }
.card-body { display: flex; flex-direction: column; gap: 40px; padding: 58px 40px 80px 41px; }
.field { width: 100%; height: 95px; padding: 2px 30px 0; border: 2px solid #ced4da; border-radius: 10px; background: #fff; color: #495057; font: inherit; letter-spacing: inherit; outline: 0; }
.field::placeholder { color: #6c757d; opacity: 1; }
.map { position: relative; height: 1000px; overflow: hidden; }
.map-canvas { display: block; width: 1165px; height: 1000px; }

.farm { fill: #f0f3dc; }
.res { fill: #d9d9d9; }
.grass { fill: #d6eec0; }
.park { fill: #bfe7b9; }
.wood { fill: #bddab1; }
.water { fill: #aad3df; }
.sand { fill: #f6e3cb; }
.line, .road, .minor, .rail, .sec, .trunk, .mway, .bound, .wet, .stream, .stripes, .forest-edge, .forest-line { fill: none; vector-effect: non-scaling-stroke; stroke-linejoin: round; }
.grass-l { stroke: #d6eec0; stroke-width: 8; }
.canal-edge { stroke: #bddab1; stroke-width: 14; }
.canal { stroke: #aad3df; stroke-width: 5; }
.river { stroke: #aad3df; stroke-width: 26; }
.river.thin { stroke-width: 14; }
.stream { stroke: #aad3df; stroke-width: 3.5; }
.road { stroke: #b7b7bb; stroke-width: 2.3; }
.minor { stroke: #bdbdc0; stroke-width: 1.6; }
.stripes { stroke: #d9d9d9; stroke-width: 2; }
.rail { stroke: #8d8d8b; stroke-width: 2.8; }
.sec { stroke: #f5c27e; stroke-width: 5; }
.trunk { stroke: #f79b80; stroke-width: 5; }
.trunk.wide { stroke-width: 6; }
.mway { stroke: #e9708a; stroke-width: 6.5; }
.mway.wide { stroke-width: 9; }
.bound { stroke: #b795b0; stroke-width: 2.6; stroke-dasharray: 13 5 2.5 5 2.5 5; opacity: .85; }
.wet { stroke: #4ba6ef; stroke-width: 3; }
.forest-edge { stroke: #93c98a; stroke-width: 11; opacity: .85; }
.forest-line { stroke: #84bd92; stroke-width: 5; }
.place { font-family: "Noto Sans", sans-serif; font-size: 28px; letter-spacing: 0; fill: #393939; stroke: rgba(255, 255, 255, .75); stroke-width: 5px; paint-order: stroke; stroke-linejoin: round; }
.place .city { font-size: 37px; }
.ref { font-family: "Noto Sans", sans-serif; font-size: 25px; font-weight: 500; font-style: italic; letter-spacing: -1px; fill: #b0323c; stroke: rgba(255, 240, 240, .85); stroke-width: 5px; paint-order: stroke; }

.zoom { position: absolute; left: 20px; top: 20px; display: flex; flex-direction: column; gap: 2px; width: 77px; padding: 7px; background: rgba(255, 255, 255, .4); border-radius: 10px; }
.zoom button { height: 63px; padding: 0; border: 0; background: rgba(0, 60, 136, .5); }
.zoom svg { display: block; width: 63px; height: 63px; stroke: #fff; stroke-width: 5; }
.zoom-in { border-radius: 5px 5px 0 0; }
.zoom-out { border-radius: 0 0 5px 5px; }
.attribution { position: absolute; right: 0; bottom: 0; display: flex; width: 612px; height: 70px; padding-left: 27px; background: rgba(255, 255, 255, .8); border-radius: 10px 0 0; line-height: 74px; color: #000; white-space: nowrap; }
.copy { width: 44px; }
.attribution a { width: 291px; color: #00f; text-decoration-thickness: 4px; text-underline-offset: 3px; }

.poster { display: flex; justify-content: space-between; height: 95px; padding: 15px 31px 0 30px; border: 2px solid #ced4da; border-radius: 10px; }
.poster-label { color: gray; line-height: 66px; }
.file { display: flex; width: 734px; height: 75px; background: #ebefef; }
.choose { width: 260px; padding: 4px 0 0; border: 1px solid #767676; border-radius: 3px; background: #efefef; color: #000; font: inherit; letter-spacing: -0.6px; white-space: nowrap; }
.none { padding-left: 10px; line-height: 79px; color: #495057; letter-spacing: -0.35px; }
.card-footer { display: flex; justify-content: center; padding: 40px 0 41px; border-top: 2px solid #dee2e6; }
.submit { width: 190px; height: 95px; padding: 4px 0 0; border: 0; border-radius: 10px; background: #007bff; color: #fff; font: inherit; letter-spacing: inherit; }
```
